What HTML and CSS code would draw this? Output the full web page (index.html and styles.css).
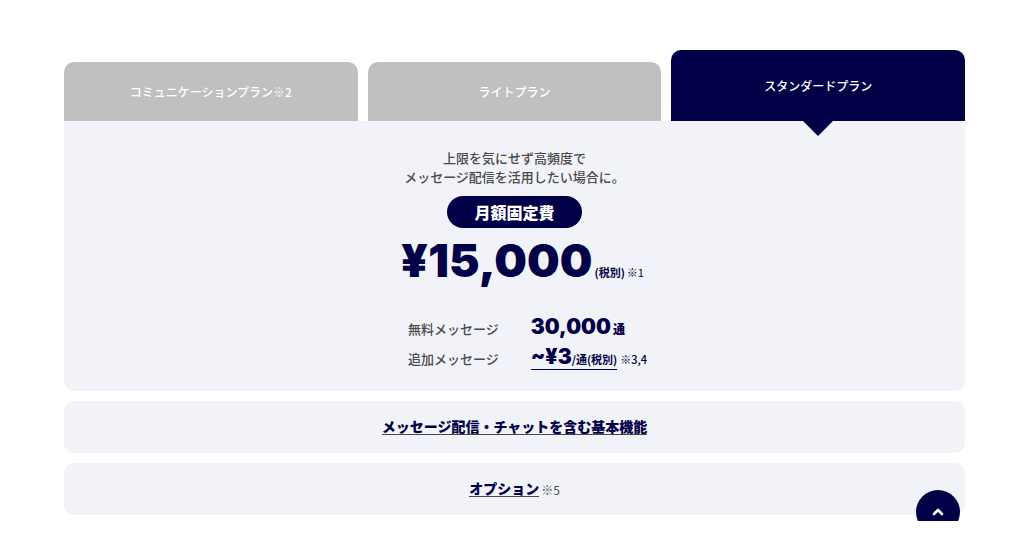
FILE: index.html
```html
<!DOCTYPE html>
<html lang="ja">
<head>
    <meta charset="UTF-8">
    <meta name="viewport" content="width=device-width, initial-scale=1.0">
    <title>料金プラン</title>
    <link rel="stylesheet" href="styles.css">
</head>
<body>
    <main class="pricing">
        <div class="tabs" role="tablist">
            <button class="tab" type="button" role="tab" aria-selected="false">コミュニケーションプラン※2</button>
            <button class="tab" type="button" role="tab" aria-selected="false">ライトプラン</button>
            <button class="tab active" type="button" role="tab" aria-selected="true">スタンダードプラン</button>
        </div>

        <section class="panel" role="tabpanel">
            <p class="lead">上限を気にせず高頻度で<br>メッセージ配信を活用したい場合に。</p>
            <span class="badge">月額固定費</span>
            <p class="price"><strong class="price-value">¥15,000</strong><b>(税別)</b><span>※1</span></p>
            <dl class="details">
                <dt>無料メッセージ</dt>
                <dd><strong class="amount">30,000</strong><b class="unit">通</b></dd>
                <dt>追加メッセージ</dt>
                <dd><a class="extra" href="#"><strong class="amount">~¥3</strong><b>/通(税別)</b></a> <span class="note">※3,4</span></dd>
            </dl>
        </section>

        <section class="row"><a class="row-link" href="#">メッセージ配信・チャットを含む基本機能</a></section>
        <section class="row"><a class="row-link" href="#">オプション</a><span class="row-note">※5</span></section>

        <a class="page-top" href="#" aria-label="ページの先頭へ">
            <svg width="12" height="8" viewBox="0 0 12 8" aria-hidden="true">
                <path d="M2 6 L6 2 L10 6" fill="none" stroke="#fff" stroke-width="2.6" stroke-linecap="round" stroke-linejoin="round"/>
            </svg>
        </a>
    </main>
</body>
</html>
```

FILE: styles.css
```css
* {
    box-sizing: border-box;
}

body {
    margin: 0;
    background-color: #fff;
    color: #4a4a4a;
    font-family: "Noto Sans CJK JP", sans-serif;
}

p,
dl,
dd {
    margin: 0;
}

.pricing {
    position: relative;
    padding: 50px 59px 6px 64px;
    overflow: hidden;
}

/* tabs */
.tabs {
    display: grid;
    grid-template-columns: repeat(3, 1fr);
    gap: 10px;
    align-items: end;
}

.tab {
    position: relative;
    height: 59px;
    padding: 0;
    border: 0;
    border-radius: 10px 10px 0 0;
    background-color: #c0c0c0;
    color: #fff;
    font-family: inherit;
    font-size: 12px;
    font-weight: 500;
    cursor: pointer;
}

.tab.active {
    height: 71px;
    background-color: #020046;
}

.tab.active::after {
    content: "";
    position: absolute;
    top: 100%;
    left: 50%;
    margin-left: -15px;
    border: 15px solid transparent;
    border-top-color: #020046;
    border-bottom: 0;
}

/* plan panel */
.panel {
    display: flex;
    flex-direction: column;
    align-items: center;
    padding: 27px 0 16px;
    border-radius: 0 0 10px 10px;
    background-color: #f2f3f8;
}

.lead {
    font-size: 13px;
    font-weight: 500;
    line-height: 19px;
    text-align: center;
}

.badge {
    margin-top: 10px;
    padding: 0 27px;
    border-radius: 16px;
    background-color: #020046;
    color: #fff;
    font-size: 16px;
    font-weight: 900;
    line-height: 32px;
}

.price {
    display: flex;
    align-items: baseline;
    gap: 2px;
    height: 52px;
    margin-top: 7px;
    padding-left: 16px;
    color: #020046;
    font-size: 11px;
    line-height: 16px;
}

.price-value {
    font-family: Inter, sans-serif;
    font-size: 46px;
    font-weight: 900;
    line-height: 50px;
}

.details {
    display: grid;
    grid-template-columns: auto auto;
    grid-auto-rows: 30px;
    column-gap: 32px;
    align-items: baseline;
    margin-top: 28px;
    padding-left: 26px;
    font-size: 13px;
    font-weight: 500;
    line-height: 24px;
}

.details dd {
    color: #020046;
}

.amount {
    font-family: Inter, sans-serif;
    font-size: 21px;
    font-weight: 900;
}

.unit {
    margin-left: 2px;
    font-size: 12px;
    font-weight: 900;
}

.extra {
    padding-bottom: 2px;
    border-bottom: 1px solid #020046;
    color: #020046;
    font-size: 11px;
    text-decoration: none;
}

.note {
    font-size: 11px;
}

/* linked rows */
.row {
    display: flex;
    align-items: center;
    justify-content: center;
    min-height: 52px;
    margin-top: 10px;
    border-radius: 10px;
    background-color: #f2f3f8;
    font-size: 14px;
}

.row-link {
    border-bottom: 1px solid #4a4a4a;
    color: #020046;
    font-weight: 900;
    line-height: 15px;
    text-decoration: none;
}

.row-note {
    margin-left: 2px;
    font-size: 12px;
}

.page-top {
    position: absolute;
    right: 64px;
    bottom: -13px;
    display: flex;
    align-items: center;
    justify-content: center;
    width: 44px;
    height: 44px;
    border-radius: 50%;
    background-color: #020046;
}
```
